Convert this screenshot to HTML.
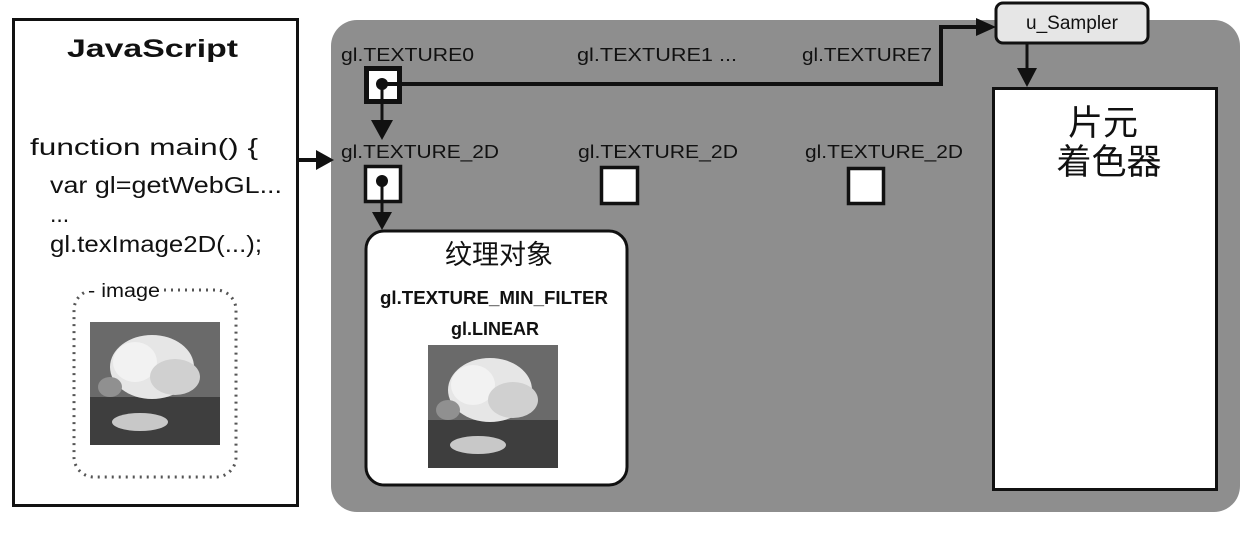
<!DOCTYPE html>
<html><head><meta charset="utf-8"><style>
html,body{margin:0;padding:0;background:#fff;}
svg{display:block}
text{font-family:"Liberation Sans","Noto Sans CJK SC",sans-serif;fill:#111}
</style></head><body>
<svg width="1258" height="536" viewBox="0 0 1258 536" xmlns="http://www.w3.org/2000/svg">
<defs>
<g id="img">
<rect x="0" y="0" width="130" height="123" fill="#6a6a6a"/>
<rect x="0" y="75" width="130" height="48" fill="#3e3e3e"/>
<ellipse cx="62" cy="45" rx="42" ry="32" fill="#e6e6e6"/>
<ellipse cx="45" cy="40" rx="22" ry="20" fill="#f2f2f2"/>
<ellipse cx="85" cy="55" rx="25" ry="18" fill="#d0d0d0"/>
<ellipse cx="50" cy="100" rx="28" ry="9" fill="#c8c8c8"/>
<ellipse cx="20" cy="65" rx="12" ry="10" fill="#909090"/>
</g>
</defs>
<!-- JS box -->
<rect x="13.5" y="19.5" width="284" height="486" fill="#fff" stroke="#111" stroke-width="3"/>
<text x="67" y="57" font-size="25" font-weight="bold" textLength="171" lengthAdjust="spacingAndGlyphs">JavaScript</text>
<text x="30" y="155" font-size="23" textLength="228" lengthAdjust="spacingAndGlyphs">function main() {</text>
<text x="50" y="193" font-size="23" textLength="232" lengthAdjust="spacingAndGlyphs">var gl=getWebGL...</text>
<text x="50" y="222" font-size="23">...</text>
<text x="50" y="252" font-size="23" textLength="212" lengthAdjust="spacingAndGlyphs">gl.texImage2D(...);</text>
<rect x="74" y="290" width="162" height="187" rx="20" fill="none" stroke="#555" stroke-width="3" stroke-dasharray="2 5"/>
<rect x="86" y="280" width="76" height="20" fill="#fff"/>
<text x="88" y="297" font-size="19" textLength="72" lengthAdjust="spacingAndGlyphs">- image</text>
<use href="#img" x="90" y="322"/>
<!-- panel -->
<rect x="331" y="20" width="909" height="492" rx="26" fill="#8e8e8e"/>
<line x1="298" y1="160" x2="318" y2="160" stroke="#111" stroke-width="4"/>
<polygon points="316,150 334,160 316,170" fill="#111"/>
<!-- labels -->
<text x="341" y="61" font-size="18" textLength="133" lengthAdjust="spacingAndGlyphs">gl.TEXTURE0</text>
<text x="577" y="61" font-size="18" textLength="160" lengthAdjust="spacingAndGlyphs">gl.TEXTURE1 ...</text>
<text x="802" y="61" font-size="18" textLength="130" lengthAdjust="spacingAndGlyphs">gl.TEXTURE7</text>
<text x="341" y="158" font-size="18" textLength="158" lengthAdjust="spacingAndGlyphs">gl.TEXTURE_2D</text>
<text x="578" y="158" font-size="18" textLength="160" lengthAdjust="spacingAndGlyphs">gl.TEXTURE_2D</text>
<text x="805" y="158" font-size="18" textLength="158" lengthAdjust="spacingAndGlyphs">gl.TEXTURE_2D</text>
<!-- texture0 unit -->
<rect x="366.5" y="68.5" width="33" height="33" fill="#fff" stroke="#111" stroke-width="5"/>
<polyline points="382,84 941,84 941,27 978,27" fill="none" stroke="#111" stroke-width="4"/>
<polygon points="976,18 996,27 976,36" fill="#111"/>
<circle cx="382" cy="84" r="6" fill="#111"/>
<line x1="382" y1="84" x2="382" y2="125" stroke="#111" stroke-width="3"/>
<polygon points="371,120 393,120 382,140" fill="#111"/>
<!-- texture_2d units -->
<rect x="365.5" y="166.5" width="35" height="35" fill="#fff" stroke="#111" stroke-width="3.5"/>
<circle cx="382" cy="181" r="6" fill="#111"/>
<line x1="382" y1="181" x2="382" y2="215" stroke="#111" stroke-width="3"/>
<polygon points="372,212 392,212 382,230" fill="#111"/>
<rect x="601.5" y="167.5" width="36" height="36" fill="#fff" stroke="#111" stroke-width="3.5"/>
<rect x="848.5" y="168.5" width="35" height="35" fill="#fff" stroke="#111" stroke-width="3.5"/>
<!-- texture object -->
<rect x="366" y="231" width="261" height="254" rx="18" fill="#fff" stroke="#111" stroke-width="3"/>
<text x="499" y="264" font-size="27" text-anchor="middle">纹理对象</text>
<text x="380" y="304" font-size="18" font-weight="bold" textLength="228" lengthAdjust="spacingAndGlyphs">gl.TEXTURE_MIN_FILTER</text>
<text x="495" y="335" font-size="18" font-weight="bold" text-anchor="middle">gl.LINEAR</text>
<use href="#img" x="428" y="345"/>
<!-- u_Sampler -->
<rect x="996" y="3" width="152" height="40" rx="7" fill="#e6e6e6" stroke="#111" stroke-width="3"/>
<text x="1072" y="29" font-size="19" text-anchor="middle">u_Sampler</text>
<line x1="1027" y1="44" x2="1027" y2="72" stroke="#111" stroke-width="3"/>
<polygon points="1017,68 1037,68 1027,87" fill="#111"/>
<!-- fragment shader -->
<rect x="993.5" y="88.5" width="223" height="401" fill="#fff" stroke="#111" stroke-width="3"/>
<text x="1103" y="135" font-size="35" text-anchor="middle">片元</text>
<text x="1109" y="174" font-size="35" text-anchor="middle">着色器</text>
</svg>
</body></html>
